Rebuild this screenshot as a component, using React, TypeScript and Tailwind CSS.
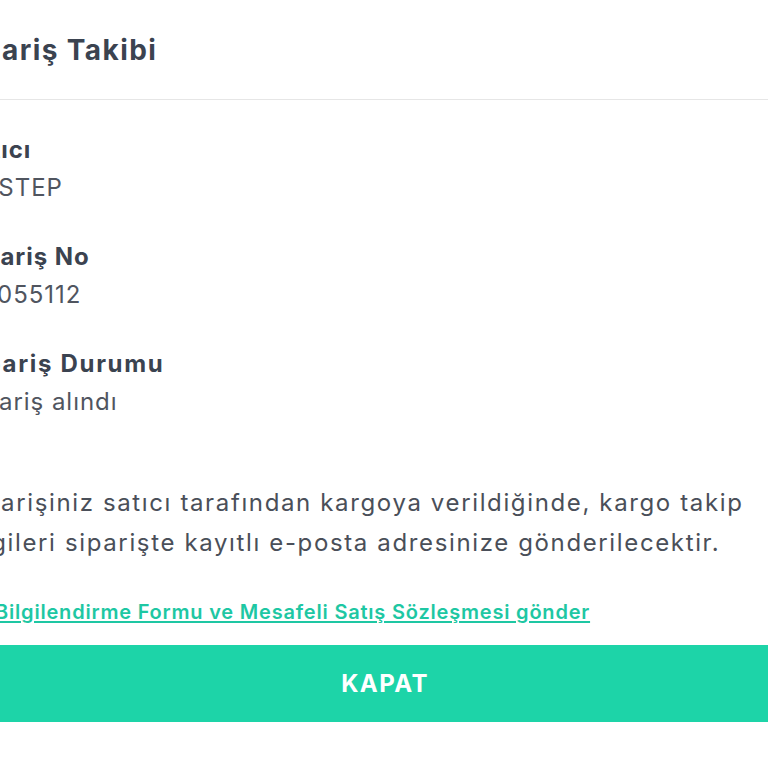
import React from "react";

export default function App() {
  return (
    <div className="w-full h-[768px] overflow-hidden bg-white" style={{ fontFamily: "Inter, 'Noto Sans', sans-serif" }}>
      <div className="ml-[-64px] w-[898px] flex flex-col">
        <div className="h-[100px] flex items-center pl-[18px] border-b border-[#e6e6e6]">
          <h1 className="text-[28px] font-bold text-[#3b4350] tracking-[0.05em]">Sipariş Takibi</h1>
        </div>
        <div className="px-[24px] pt-[32px] flex flex-col tracking-[0.06em]">
          <div className="flex flex-col h-[107px]">
            <span className="text-[24px] font-bold text-[#3b4350] leading-[36px]">Satıcı</span>
            <span className="text-[24px] text-[#50555f] leading-[40px]">ONSTEP</span>
          </div>
          <div className="flex flex-col h-[107px]">
            <span className="text-[24px] font-bold text-[#3b4350] leading-[36px]">Sipariş No</span>
            <span className="text-[24px] text-[#50555f] leading-[40px]">121055112</span>
          </div>
          <div className="flex flex-col h-[120px]">
            <span className="text-[24px] font-bold text-[#3b4350] leading-[36px] tracking-[0.07em]">Sipariş Durumu</span>
            <span className="text-[24px] text-[#50555f] leading-[40px]">Sipariş alındı</span>
          </div>
          <p className="text-[24px] text-[#4a4f59] leading-[40px] mt-[17px] tracking-[0.068em]">
            Siparişiniz satıcı tarafından kargoya verildiğinde, kargo takip
            <br />
            bilgileri siparişte kayıtlı e-posta adresinize gönderilecektir.
          </p>
          <a href="#" className="mt-[35px] text-[20px] font-semibold text-[#1ec7a3] underline underline-offset-2 leading-[28px] tracking-[0.04em]">
            Ön Bilgilendirme Formu ve Mesafeli Satış Sözleşmesi gönder
          </a>
        </div>
        <div className="mt-[19px] px-[24px]">
          <button className="w-full h-[77px] bg-[#1dd4a8] text-white text-[24px] font-bold tracking-[0.06em]">KAPAT</button>
        </div>
      </div>
    </div>
  );
}
